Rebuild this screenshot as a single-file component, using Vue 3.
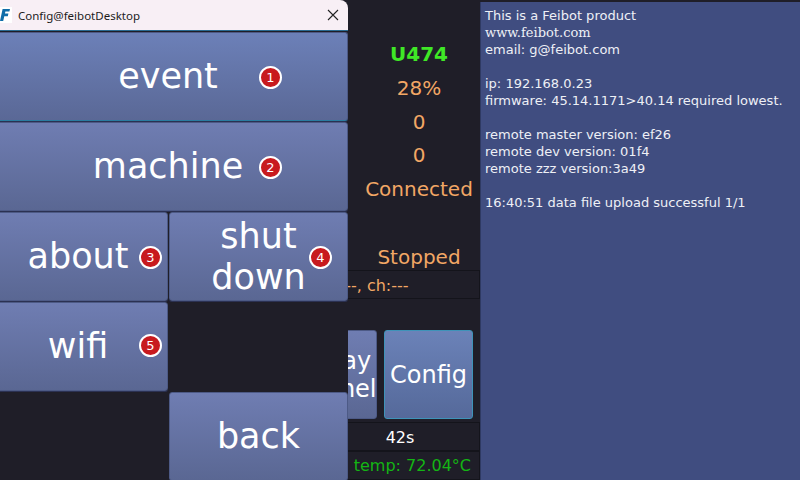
<template>
  <div class="screen">
    <div class="main">
      <div class="status">
        <div class="model">U474</div>
        <div class="val">28%</div>
        <div class="val">0</div>
        <div class="val">0</div>
        <div class="val">Connected</div>
        <div class="val blank"></div>
        <div class="val">Stopped</div>
      </div>
      <div class="box channel">---, ch:---</div>
      <div class="actions">
        <button class="btn action">Display Channel</button>
        <button class="btn action active">Config</button>
      </div>
      <div class="box timer">42s</div>
      <div class="box temp">temp: 72.04°C</div>
    </div>

    <div class="info">
      <div v-for="(line, i) in infoLines" :key="i" class="line" :class="{ serif: line.serif }">{{ line.text }}</div>
    </div>

    <div class="window">
      <div class="titlebar">
        <div class="app-icon">
          <svg width="12" height="16" viewBox="0 0 12 16">
            <path d="M0 14 L2.6 2 H10 L9.4 4.6 H5.4 L4.9 6.6 H8.4 L7.8 9.2 H4.3 L3.2 14 Z" fill="#0f6da8" />
          </svg>
        </div>
        <span class="title">Config@feibotDesktop</span>
        <svg class="close" width="12" height="12" viewBox="0 0 12 12">
          <path d="M1 1 L11 11 M11 1 L1 11" stroke="#222" stroke-width="1.1" fill="none" />
        </svg>
      </div>
      <div class="menu">
        <button
          v-for="item in menuItems"
          :key="item.label"
          class="btn menu-btn"
          :class="item.cls"
        >
          <span class="label">{{ item.label }}</span>
          <span v-if="item.num" class="badge">{{ item.num }}</span>
        </button>
      </div>
    </div>
  </div>
</template>

<script setup>
const infoLines = [
  { text: 'This is a Feibot product' },
  { text: 'www.feibot.com', serif: true },
  { text: 'email: g@feibot.com' },
  { text: '\u00a0' },
  { text: 'ip: 192.168.0.23' },
  { text: 'firmware: 45.14.1171>40.14 required lowest.' },
  { text: '\u00a0' },
  { text: 'remote master version: ef26' },
  { text: 'remote dev version: 01f4' },
  { text: 'remote zzz version:3a49' },
  { text: '\u00a0' },
  { text: '16:40:51 data file upload successful 1/1' }
]

const menuItems = [
  { label: 'event', num: 1, cls: 'wide first' },
  { label: 'machine', num: 2, cls: 'wide' },
  { label: 'about', num: 3, cls: 'small' },
  { label: 'shut down', num: 4, cls: 'shut' },
  { label: 'wifi', num: 5, cls: 'small wifi' },
  { label: 'back', cls: 'back' }
]
</script>

<style>
html,
body {
  margin: 0;
  background: #1f1e28;
}
</style>

<style scoped>
.screen {
  position: relative;
  display: flex;
  width: 800px;
  height: 480px;
  overflow: hidden;
  background: #1f1e28;
  font-family: "DejaVu Sans", sans-serif;
}

.main {
  width: 480px;
  height: 480px;
  display: flex;
  flex-direction: column;
}

.status {
  height: 270px;
  padding-top: 38px;
  padding-left: 359px;
  box-sizing: border-box;
}

.model,
.val {
  height: 33.75px;
  line-height: 33px;
  width: 120px;
  text-align: center;
  white-space: nowrap;
  font-size: 20px;
  color: #f2a765;
}

.model {
  color: #3fe826;
  font-weight: bold;
}

.box {
  box-sizing: border-box;
  border: 1px solid #14141b;
  text-align: center;
  white-space: nowrap;
}

.channel {
  height: 29px;
  line-height: 29px;
  font-size: 16px;
  color: #f2a765;
  padding-left: 268px;
}

.actions {
  height: 123px;
  display: flex;
  justify-content: flex-end;
  align-items: flex-end;
  gap: 7px;
  padding: 0 7px 3px 0;
  box-sizing: border-box;
}

.btn {
  font-family: "DejaVu Sans", sans-serif;
  color: #fff;
  background: linear-gradient(#6f7db2, #5a6793);
  border: 1px solid #4d5a86;
  border-radius: 3px;
  padding: 0;
  box-sizing: border-box;
}

.action {
  width: 100px;
  height: 89px;
  font-size: 24px;
  line-height: 28px;
}

.action.active {
  width: 89px;
  background: linear-gradient(#6b82b8, #55699a);
  border-color: #3e93b8;
}

.timer {
  height: 29px;
  line-height: 29px;
  font-size: 16px;
  color: #fff;
  padding-left: 320px;
}

.temp {
  height: 29px;
  line-height: 27px;
  font-size: 16px;
  color: #14b514;
  text-align: right;
  padding-right: 8px;
}

.info {
  width: 320px;
  height: 478px;
  margin-top: 2px;
  box-sizing: border-box;
  padding: 5px 4px;
  background: #404d80;
  border-left: 1px solid #2f3a63;
  color: #eef0f6;
  font-size: 13px;
  line-height: 17px;
}

.line {
  white-space: nowrap;
}

.serif {
  font-family: "DejaVu Serif", serif;
}

/* dialog sits over the main view, its left edge runs off the screen */
.window {
  position: absolute;
  left: -12px;
  top: 0;
  width: 360px;
  height: 480px;
  display: flex;
  flex-direction: column;
  background: #1f1e28;
  border-radius: 0 8px 0 0;
  overflow: hidden;
}

.titlebar {
  height: 31px;
  flex-shrink: 0;
  display: flex;
  align-items: center;
  background: #f8eff5;
  border-bottom: 1px solid #2a6a90;
  box-sizing: border-box;
}

.app-icon {
  margin-left: 12px;
  width: 12px;
  height: 16px;
  background: #fff;
}

.title {
  margin-left: 6px;
  font-family: "Noto Sans", sans-serif;
  font-size: 11.5px;
  color: #1c1c1c;
}

.close {
  margin-left: auto;
  margin-right: 9px;
}

.menu {
  display: grid;
  grid-template-columns: 180px 180px;
  grid-auto-rows: 90px;
  margin-top: 1px;
}

.menu-btn {
  position: relative;
  height: 89px;
  font-size: 35px;
  line-height: 41px;
  box-shadow: 0 1px 0 #2b3152;
}

.menu-btn .label {
  display: inline-block;
  width: 130px;
}

.wide {
  grid-column: 1 / 3;
}

.wide .label {
  width: auto;
}

.shut {
  margin-left: 1px;
}

.back {
  grid-column: 2;
  grid-row: 5;
  margin-left: 1px;
  box-shadow: none;
}

.badge {
  position: absolute;
  top: 33px;
  right: 5px;
  width: 23px;
  height: 23px;
  box-sizing: border-box;
  border: 2px solid #fff;
  border-radius: 50%;
  background: #c81a1e;
  font-size: 13px;
  line-height: 19px;
  text-align: center;
  color: #fff;
}

.wide .badge {
  right: 65px;
}

.shut .badge {
  right: 15px;
}

.wifi .badge {
  top: 31px;
}

.first {
  background: linear-gradient(#6c80b8, #5a6896);
  border-bottom-color: #2a7ca0;
}
</style>
